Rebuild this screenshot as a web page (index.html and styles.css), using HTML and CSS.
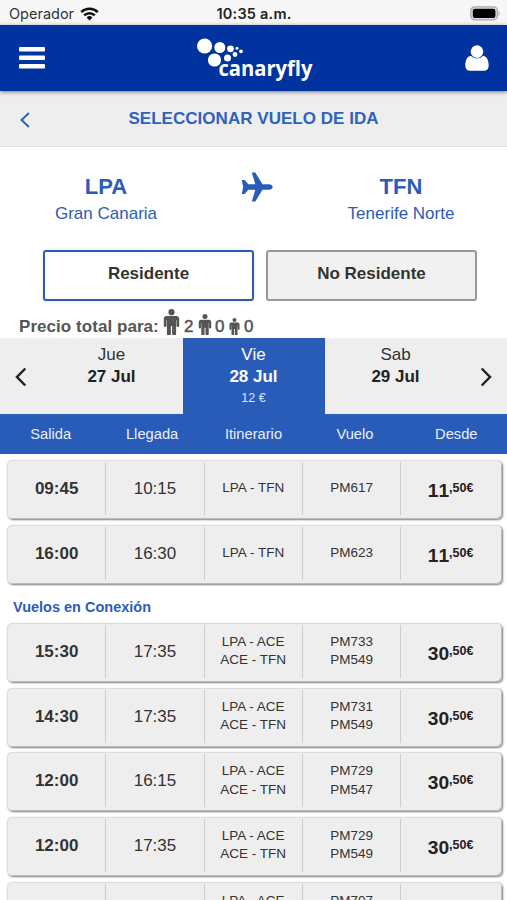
FILE: index.html
```html
<!DOCTYPE html>
<html lang="es">
<head>
<meta charset="utf-8">
<meta name="viewport" content="width=device-width, initial-scale=1">
<title>Canaryfly</title>
<link rel="stylesheet" href="styles.css">
</head>
<body>
<svg class="defs" width="0" height="0" aria-hidden="true">
  <symbol id="person" viewBox="0 0 16 26">
    <circle cx="8" cy="3.2" r="3.1"/>
    <path d="M3.400 7h9.200c2 0 3.100 1.200 3.100 3v6.700a1.350 1.350 0 0 1-2.700 0V11h-.4v13.700a1.900 1.900 0 0 1-4 0V17h-1.200v7.700a1.900 1.900 0 0 1-4 0V11H3v5.700a1.350 1.350 0 0 1-2.700 0V10C.3 8.200 1.400 7 3.400 7z"/>
  </symbol>
</svg>
<div class="status">
  <div class="status-left"><span>Operador</span>
    <svg width="19" height="14" viewBox="0 0 19 14" fill="none" stroke="#111" stroke-width="2.500"><path d="M1.200 5.100a12 12 0 0 1 16.600 0"/><path d="M4.200 8.300a7.600 7.600 0 0 1 10.600 0"/><path d="M9.500 13.600l-2.900-3.100a4.200 4.200 0 0 1 5.800 0z" fill="#111" stroke="none"/></svg>
  </div>
  <div class="status-time">10:35 a.m.</div>
  <div class="status-right">
    <svg width="31" height="15" viewBox="0 0 31 15"><rect x=".8" y=".8" width="26.600" height="13" rx="4" fill="#ddd" stroke="#aaa" stroke-width="1.300"/><rect x="2.800" y="2.700" width="22.600" height="9.200" rx="2" fill="#000"/><path d="M28.600 5a3.200 3.200 0 0 1 0 5z" fill="#aaa"/></svg>
  </div>
</div>
<header class="topbar">
  <svg class="menu" width="26" height="22" viewBox="0 0 26 22" fill="#fff"><rect width="26" height="4.400" rx="1"/><rect y="8.500" width="26" height="4.400" rx="1"/><rect y="17" width="26" height="4.400" rx="1"/></svg>
  <svg class="logo" width="120" height="46" viewBox="0 0 120 46" fill="#fff"><circle cx="9.600" cy="9" r="7.600"/><circle cx="24.800" cy="10.500" r="5.500"/><circle cx="19.500" cy="23" r="6.600"/><circle cx="35.500" cy="11.800" r="3.400"/><circle cx="32.500" cy="21" r="3.500"/><circle cx="40" cy="17.500" r="2.400"/><circle cx="42" cy="11.300" r="1.500"/><circle cx="46" cy="14.300" r="1.900"/><text class="logo-text" x="23.500" y="39" textLength="94" lengthAdjust="spacingAndGlyphs">canaryfly</text></svg>
  <svg class="user" width="24" height="26" viewBox="0 0 24 26" fill="#fff"><path d="M5.800 10.800C2 11.500.3 15.500.3 20.500c0 3.500 1.900 5.200 4.900 5.200h13.600c3 0 4.900-1.700 4.900-5.200 0-5-1.700-9-5.500-9.700A8.300 8.300 0 0 1 12 13.500a8.300 8.300 0 0 1-6.200-2.700z"/><circle cx="12" cy="6.600" r="6.300"/></svg>
</header>
<div class="titlebar">
  <svg width="10" height="16" viewBox="0 0 10 16" fill="none" stroke="#2a5cba" stroke-width="1.900"><path d="M8.900 1L1.500 8l7.400 7"/></svg>
  <h1>SELECCIONAR VUELO DE IDA</h1>
</div>
<section class="route">
  <div class="place"><b>LPA</b><span>Gran Canaria</span></div>
  <svg class="plane" width="32" height="32" viewBox="0 0 32 32" fill="#295bb9"><path d="M10.800 1.500h3.500l7.200 11.700h6.200c2.200 0 4 1.400 4 2.800s-1.800 2.800-4 2.800h-6.200l-7.200 11.700h-3.500l3.500-11.700H7.300l-3.700 4.100H.7L2.200 16 .7 9.100h2.900l3.700 4.100h7z"/></svg>
  <div class="place"><b>TFN</b><span>Tenerife Norte</span></div>
</section>
<div class="choice"><div class="option active">Residente</div><div class="option">No Residente</div></div>
<div class="pax">
  <b>Precio total para:</b>
  <svg class="adult"><use href="#person"/></svg><span>2</span>
  <svg class="child"><use href="#person"/></svg><span>0</span>
  <svg class="infant"><use href="#person"/></svg><span>0</span>
</div>
<div class="days">
  <svg class="arrow" width="12" height="20" viewBox="0 0 12 20"><path d="M10.300 1.500L2 10l8.300 8.500"/></svg>
  <div class="day"><span>Jue</span><b>27 Jul</b></div>
  <div class="day selected"><span>Vie</span><b>28 Jul</b><small>12 €</small></div>
  <div class="day"><span>Sab</span><b>29 Jul</b></div>
  <svg class="arrow next" width="12" height="20" viewBox="0 0 12 20"><path d="M1.700 1.500L10 10l-8.300 8.500"/></svg>
</div>
<div class="heads"><span>Salida</span><span>Llegada</span><span>Itinerario</span><span>Vuelo</span><span>Desde</span></div>
<main>
  <div class="list">
    <div class="flight"><b>09:45</b><span>10:15</span><small>LPA - TFN</small><small>PM617</small><strong>11<sup>,50€</sup></strong></div>
    <div class="flight"><b>16:00</b><span>16:30</span><small>LPA - TFN</small><small>PM623</small><strong>11<sup>,50€</sup></strong></div>
  </div>
  <h2>Vuelos en Conexión</h2>
  <div class="list">
    <div class="flight double"><b>15:30</b><span>17:35</span><small>LPA - ACE<br>ACE - TFN</small><small>PM733<br>PM549</small><strong>30<sup>,50€</sup></strong></div>
    <div class="flight double"><b>14:30</b><span>17:35</span><small>LPA - ACE<br>ACE - TFN</small><small>PM731<br>PM549</small><strong>30<sup>,50€</sup></strong></div>
    <div class="flight double"><b>12:00</b><span>16:15</span><small>LPA - ACE<br>ACE - TFN</small><small>PM729<br>PM547</small><strong>30<sup>,50€</sup></strong></div>
    <div class="flight double"><b>12:00</b><span>17:35</span><small>LPA - ACE<br>ACE - TFN</small><small>PM729<br>PM549</small><strong>30<sup>,50€</sup></strong></div>
    <div class="flight double"><b></b><span></span><small>LPA - ACE</small><small>PM707</small><strong></strong></div>
  </div>
</main>
</body>
</html>
```
FILE: styles.css
```css
* { box-sizing: border-box; }
html { height: 900px; overflow: hidden; }
body {
  margin: 0;
  width: 507px;
  height: 900px;
  overflow: hidden;
  background: #fff;
  color: #333;
  font: 17px/20px "Liberation Sans", Arial, sans-serif;
}
svg { display: block; flex: none; }
.defs { display: none; }

.status {
  display: grid;
  grid-template-columns: 1fr auto 1fr;
  height: 25px;
  padding: 2px 6px 0 9px;
  align-items: center;
  background: #f7f7f7;
  color: #333;
  font: 14.5px/22px Inter, sans-serif;
}
.status-left { display: flex; align-items: center; gap: 6px; }
.status-time { margin-left: -2px; color: #222; font-weight: 600; letter-spacing: .2px; }
.status-right { display: flex; justify-content: flex-end; }

.topbar {
  position: relative;
  display: flex;
  justify-content: space-between;
  height: 66px;
  padding: 0 18px 0 19px;
  background: #0032a0;
  box-shadow: 0 1px 4px rgba(0, 0, 0, .5);
}
.menu { margin-top: 22px; }
.logo { margin: 12px 1px 0 0; }
.user { margin-top: 20px; }
.logo-text { font: 700 20.500px "Open Sans", sans-serif; }

.titlebar {
  display: flex;
  align-items: center;
  height: 56px;
  padding: 2px 20px 0;
  background: #eee;
  border-bottom: 1px solid #e2e2e2;
}
.titlebar h1 {
  flex: 1;
  margin: 0 10px 1px 0;
  text-align: center;
  color: #2f62bd;
  font-size: 17px;
  letter-spacing: .03px;
}

.route {
  display: grid;
  grid-template-columns: 188px 1fr 188px;
  height: 103px;
  padding: 0 12px;
  color: #2b5cba;
}
.place { display: flex; flex-direction: column; align-items: center; padding-top: 28px; }
.place b { font-size: 22px; line-height: 24px; }
.place span { margin-top: 5px; }
.plane { justify-self: center; margin: 24px 0 0 7px; }

.choice { display: grid; grid-template-columns: 211px 211px; gap: 12px; padding-left: 43px; }
.option {
  height: 51px;
  border: 2px solid #999;
  border-radius: 3px;
  background: #f1f1f1;
  text-align: center;
  font-weight: 700;
  line-height: 43px;
}
.option.active { border-color: #295bb9; background: #fff; box-shadow: 0 0 5px rgba(0, 0, 0, .08); }

.pax { display: flex; align-items: flex-end; height: 37px; padding: 0 0 2px 19px; color: #555; }
.pax b { width: 144px; letter-spacing: .05px; }
.pax b, .pax span { position: relative; top: 1px; }
.pax span { width: 10px; -webkit-text-stroke: .5px #555; }
.pax svg { fill: #555; margin-bottom: 1px; }
.adult { width: 17px; height: 26px; margin-right: 4px; }
.child { width: 14px; height: 21px; margin: 0 3px 0 4px; }
.infant { width: 11px; height: 17px; margin: 0 4px; }

.days { display: grid; grid-template-columns: 41px 142px 142px 142px 40px; height: 76px; background: #eee; }
.day { display: flex; flex-direction: column; align-items: center; padding: 6px 1px 0 0; line-height: 22px; }
.day b { color: #222; }
.day small { font-size: 12.500px; line-height: 20px; }
.day.selected, .day.selected b { color: #fff; }
.day.selected { background: #295bb9; }
.day.selected small { color: #dce6fa; }
.arrow { margin: 29px 0 0 15px; fill: none; stroke: #222; stroke-width: 2.500; }
.arrow.next { margin-left: 13px; }

.heads {
  display: grid;
  grid-template-columns: repeat(5, 1fr);
  height: 40px;
  background: #295bb9;
  color: #e9effb;
  text-align: center;
  font-size: 14.700px;
  line-height: 41px;
}

main { padding: 6px 5px 0 7px; }
.list { display: flex; flex-direction: column; gap: 5.800px; }
.flight {
  display: grid;
  grid-template-columns: 98.300px 98.300px 98.300px 98.300px 1fr;
  height: 59px;
  padding: 1px 0 4px;
  border: 1px solid #ddd;
  border-width: 1px 0 0 1px;
  border-radius: 5px;
  background: #eee;
  box-shadow: inset -1px -1px 0 #bbb, 1px 1px 2px rgba(0, 0, 0, .5);
  text-align: center;
  line-height: 54px;
}
.flight > * { height: 53px; border-right: 1px solid #ccc; }
.flight > :last-child { border-right: 0; }
.flight small { font-size: 13.500px; line-height: 51px; }
.flight.double small { padding-top: 8px; line-height: 18.300px; }
.flight strong { padding-right: 2px; color: #222; font-size: 19.200px; line-height: 57px; font-kerning: none; }
.flight sup { font-size: 12.500px; line-height: 0; vertical-align: 5px; }
h2 { margin: 0; padding: 4px 6px 0; height: 39px; color: #2b5cba; font-size: 14.500px; line-height: 38px; }
```
